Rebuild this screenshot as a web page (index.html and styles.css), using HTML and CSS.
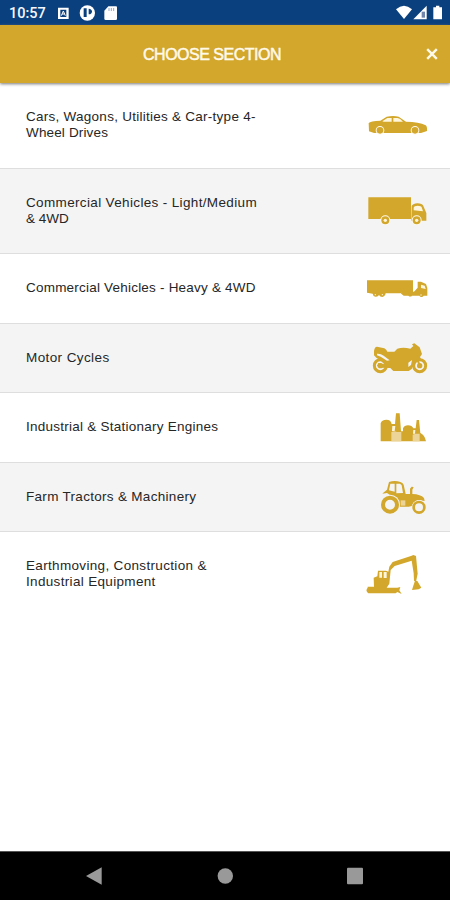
FILE: index.html
```html
<!DOCTYPE html>
<html lang="en">
<head>
<meta charset="utf-8">
<title>Choose Section</title>
<link rel="stylesheet" href="styles.css">
</head>
<body>
<div class="screen">
  <div class="status">
    <span class="clock">10:57</span>
    <svg class="status-left" viewBox="0 0 180 75">
      <path fill="#fff" fill-rule="evenodd" d="M3 23h32v34H3zM10 29v22h18V29z"/>
      <path fill="none" stroke="#fff" stroke-width="3" d="M13 47l6-14 6 14M15 42h8"/>
      <circle cx="91" cy="39" r="23" fill="#fff"/>
      <path fill="#0b407e" d="M80 25h9v26H80zM95 26c13 0 14 17 0 17z"/>
      <path fill="#fff" d="M154 19h23q3 0 3 3v34q0 4-4 4h-30q-4 0-4-4V32z"/>
      <path stroke="#8298b9" stroke-width="2.5" d="M156 24v9M163 24v9M170 24v9"/>
    </svg>
    <svg class="status-right" viewBox="0 0 150 75">
      <path fill="#fff" d="M0 28Q24 7 48 28L24 57z"/>
      <path fill="#fff" d="M92 17v41H52z"/>
      <path fill="#7186aa" d="M77 35h10v18H77z"/>
      <path fill="#fff" d="M120 17h10v5h8v36h-26V22h8z"/>
    </svg>
  </div>
  <header class="header">
    <h1 class="title">CHOOSE SECTION</h1>
    <svg class="close" viewBox="0 0 12 12"><path d="M1.2 1.2l9.6 9.6M10.8 1.2l-9.6 9.6"/></svg>
  </header>
  <main class="list">
    <div class="row tall first">
      <span class="label l1">Cars, Wagons, Utilities &amp; Car-type 4-<br><span class="l1b">Wheel Drives</span></span>
      <svg class="icon" viewBox="0 -15 270 150">
        <path d="M41 54q5-6 35-7l19-12q20-4 36 0l22 15q39 0 59 11 5 3 4 17l-18 6H57l-15-5z"/>
        <path class="light" d="M82 49l15-10h13v11H86zM115 39h13q7 1 16 11h-29z"/>
        <circle class="wheel" cx="75" cy="76" r="10"/><circle class="wheel" cx="180" cy="76" r="10"/>
      </svg>
    </div>
    <div class="row tall alt">
      <span class="label l2">Commercial Vehicles - Light/Medium<br><span class="l2b">&amp; 4WD</span></span>
      <svg class="icon" viewBox="0 0 270 150">
        <path d="M40 34h128v65H40zM170 60q5-8 17-8 15 0 18 8l9 21v23h-45z"/>
        <path class="light" d="M176 65q1-6 12-6 11 0 12 5l4 12-28-3z"/>
        <circle class="wheel" cx="91" cy="103" r="12"/><circle class="wheel" cx="185" cy="103" r="12"/>
        <circle class="light" cx="91" cy="103" r="5"/><circle class="light" cx="185" cy="103" r="5"/>
      </svg>
    </div>
    <div class="row">
      <span class="label l3">Commercial Vehicles - Heavy &amp; 4WD</span>
      <svg class="icon" viewBox="0 -7 270 150">
        <path d="M36 45h138v37h-34l-6 2H92q-2 10-10 11-7 0-10-6-3 6-11 5-7-1-8-9l-17-3z"/>
        <path d="M136 83l8-4h33l11-12V49h10l15 7 4 12v23h-11q-4 6-10 3l-3-3h-22q-5 5-11 0h-14z"/>
        <path class="light" d="M198 58l11 3 3 10-14-3z"/>
        <circle class="light" cx="61" cy="88" r="2"/><circle class="light" cx="82" cy="88" r="2"/><circle class="light" cx="198" cy="89" r="2"/>
      </svg>
    </div>
    <div class="row alt">
      <span class="label l4">Motor Cycles</span>
      <svg class="icon" viewBox="0 -7 270 150">
        <circle class="ring" cx="76" cy="91" r="18"/><circle class="ring" cx="194" cy="91" r="18"/>
        <path d="M57 47q2-13 9-13l22 5q7 4 9 10h21l9-9q17-6 39 0l9-8-4-5 7-3 16 12 7 20-6 9 6 12-12-1-10 8-9 17-9 6h-46l-9-9-29-1-11-5 4-9 18 4-13-13-11-7-7-7z"/>
        <path class="cut" d="M66 55q11-1 20 6l18 14-8 1-19-12-11-4zM160 82l11-8-3 15-8 6z"/>
        <path class="bar" d="M183 60l11 31M76 91h31"/>
        <circle cx="76" cy="91" r="8"/><circle cx="194" cy="91" r="8"/>
      </svg>
    </div>
    <div class="row">
      <span class="label l5">Industrial &amp; Stationary Engines</span>
      <svg class="icon" viewBox="0 -10 270 150">
        <path d="M77 108V54q3-11 17-11t16 13h10l3-32h11l4 54h6V69q4-9 15-9 12 0 16 9h7l3-25h7l4 39q13 5 17 25z"/>
        <path class="light" d="M112 62h9l-2 15h-8zM175 74h6l-1 11h-6z"/>
        <path class="pale" d="M109 80q10-5 16 0h14v28h-30zM173 88l8-3h13v23h-21z"/>
      </svg>
    </div>
    <div class="row alt">
      <span class="label l6">Farm Tractors &amp; Machinery</span>
      <svg class="icon" viewBox="0 -12 270 180">
        <path d="M85 65l11-9 6-23q17-6 34 0 7 2 10 8l6 28h13V53l5-6 6 1-4 8v13q25 1 35 12l2 9-20-3-16 17-12 3h-33l-10-26-22-15-14 2z"/>
        <path class="cut" d="M106 38h13v24l-17-4zM124 38h11l5 5 4 23-20 1z"/>
        <circle class="gap" cx="105" cy="101" r="30"/><circle class="gap" cx="192" cy="109" r="22"/>
        <circle class="tractor-rear" cx="105" cy="101" r="21"/><circle class="tractor-front" cx="192" cy="109" r="16"/>
        <path class="pale" d="M137 88h14v16h-14z"/>
      </svg>
    </div>
    <div class="row tall last">
      <span class="label l7">Earthmoving, Construction &amp;<br><span class="l7b">Industrial Equipment</span></span>
      <svg class="icon" viewBox="0 -6 270 180">
        <path d="M38 122h19l-1-27 11-4 2-17h24l7 3 3-15 10-14 57-19 5-2 8 3 5 53-5 24-6-3-1-22-6-38-51 16-12 12-4 41-8 12h32l9-2-3 10 7 11-13-6-5 4H40q-10-8-2-17z"/>
        <path class="light" d="M73 78h8v17h-8zM86 78h9v18h-9z"/>
        <path d="M180 104l7 1 12 20-8 5-20 2 4-13z"/>
      </svg>
    </div>
  </main>
  <nav class="nav">
    <svg viewBox="0 0 16 18"><path d="M15.7.3v17.4L0 9z"/></svg>
    <svg viewBox="0 0 16 18"><circle cx="8.3" cy="9" r="7.7"/></svg>
    <svg viewBox="0 0 16 18"><rect y=".8" width="16" height="16.4" rx="1"/></svg>
  </nav>
</div>
</body>
</html>
```
FILE: styles.css
```css
body { margin: 0; background: #fff; }
.screen {
  display: flex;
  flex-direction: column;
  width: 450px;
  height: 900px;
  overflow: hidden;
  font-family: "Liberation Sans", Arial, sans-serif;
}
.status {
  display: flex;
  align-items: center;
  height: 25px;
  flex: none;
  background: #0b407e;
}
.clock {
  box-sizing: border-box;
  width: 57px;
  padding: 3px 0 0 9px;
  color: #f4f7ff;
  font: 500 14.5px/22px Roboto, sans-serif;
}
.status-left { width: 60px; height: 25px; }
.status-right { width: 50px; height: 25px; margin-left: 279px; }
.header {
  display: flex;
  align-items: center;
  flex: none;
  height: 58px;
  background: #d2a72b;
  box-shadow: 0 1px 3px #777;
  z-index: 1;
}
.title {
  flex: 1;
  margin: 2px 0 0;
  padding-right: 2px;
  color: #fff9e9;
  font-size: 16px;
  font-weight: 400;
  line-height: 20px;
  letter-spacing: -.5px;
  text-align: center;
  -webkit-text-stroke: .5px #fff9e9;
}
.close {
  width: 12px;
  height: 12px;
  margin-right: 12px;
  fill: none;
  stroke: #fff9e9;
  stroke-width: 2.4;
}
.list { flex: 1; }
.row {
  box-sizing: border-box;
  display: flex;
  align-items: center;
  justify-content: space-between;
  height: 69.5px;
  padding: 0 5px 0 26px;
  border-bottom: 1px solid #dedede;
}
.tall { height: 85px; }
.first { height: 86px; padding-bottom: 2px; }
.alt { background: #f4f4f4; }
.last { height: 83px; border-bottom: 0; }
.label {
  color: #262626;
  font-size: 13.5px;
  line-height: 16px;
  white-space: nowrap;
}
.l1 { letter-spacing: .26px; }
.l1b { letter-spacing: .15px; }
.l2 { letter-spacing: .35px; }
.l2b { letter-spacing: 0; }
.l3 { letter-spacing: .21px; }
.l4 { letter-spacing: .4px; }
.l5 { letter-spacing: .25px; }
.l6 { letter-spacing: .3px; }
.l7, .l7b { letter-spacing: .33px; }
.icon {
  width: 90px;
  flex: none;
  fill: #d2a72b;
}
.light { fill: #fff6dd; }
.cut { fill: #f4f4f4; }
.pale { fill: #ecd398; }
.wheel { fill: #d2a72b; stroke: #fffaf0; stroke-width: 6; paint-order: stroke; }
.ring { fill: none; stroke: #d2a72b; stroke-width: 9; }
.bar { fill: none; stroke: #d2a72b; stroke-width: 6; }
.gap { fill: #f4f4f4; }
.tractor-rear { fill: #f4f4f4; stroke: #d2a72b; stroke-width: 12; }
.tractor-front { fill: #f4f4f4; stroke: #d2a72b; stroke-width: 8; }
.nav {
  box-sizing: border-box;
  display: flex;
  flex: none;
  align-items: center;
  justify-content: space-between;
  height: 49px;
  padding: 0 87px 0 86px;
  background: #000;
  border-top: 1px solid #555;
}
.nav svg { width: 16px; height: 18px; fill: #999; }
```
